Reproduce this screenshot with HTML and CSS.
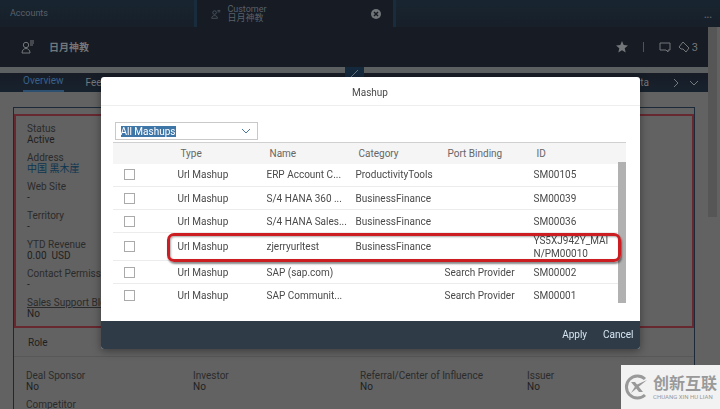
FILE: index.html
```html
<!DOCTYPE html>
<html lang="en">

<head>
    <meta charset="UTF-8">
    <meta name="viewport" content="width=device-width">
    <title>Mashup</title>
    <link rel="stylesheet" href="styles.css">
</head>

<body>
    <div class="app">
        <div class="tabbar">
            <a class="tab" href="#">Accounts</a>
            <div class="tab active">
                <svg class="tab-icon" viewBox="0 0 14 14">
                    <circle cx="5" cy="5" r="2.5" />
                    <path d="M1 13c0-5 8-5 8 0zM9 2h4M9 4h4" />
                </svg>
                <a class="tab-name" href="#">Customer<br>日月神教</a>
                <button class="close" aria-label="Close tab">
                    <svg viewBox="0 0 10 10">
                        <circle cx="5" cy="5" r="5" />
                        <path d="M3 3l4 4M7 3l-4 4" />
                    </svg>
                </button>
            </div>
            <button class="more" aria-label="More">•••</button>
        </div>

        <div class="page">
            <main>
                <header class="title">
                    <svg class="person" viewBox="0 0 14 14">
                        <circle cx="5" cy="5" r="2.7" />
                        <path d="M1 13c0-6 8-6 8 0zM9 1h4M9 3h4M9 5h3" />
                    </svg>
                    <h1>日月神教</h1>
                    <div class="actions">
                        <button aria-label="Favorite"><svg class="star" viewBox="0 0 12 12">
                                <path d="M6 0l1.7 4.1 4.3.3-3.3 2.8 1 4.3L6 9.2l-3.7 2.3 1-4.3L0 4.4l4.3-.3z" />
                            </svg></button>
                        <span class="sep"></span>
                        <button aria-label="Comments"><svg viewBox="0 0 12 12">
                                <path d="M1 2h10v7H9v2L7 9H1z" />
                            </svg></button>
                        <button class="tags" aria-label="Tags"><svg viewBox="0 0 12 12">
                                <path d="M5 1L1 6l2 2h2l3 3 3-4-4-4z" />
                            </svg>3</button>
                    </div>
                </header>
                <div class="strip">
                    <button class="edit" aria-label="Edit"><svg viewBox="0 0 12 12">
                            <path d="M2 11L10 3" />
                        </svg></button>
                </div>
                <nav>
                    <a class="current" href="#">Overview</a>
                    <a href="#">Feed</a>
                    <a class="last" href="#">Data</a>
                    <button aria-label="Next"><svg viewBox="0 0 10 10">
                            <path d="M3 1l4 4-4 4" />
                        </svg></button>
                    <button aria-label="All sections"><svg viewBox="0 0 10 10">
                            <path d="M1 3l4 4 4-4" />
                        </svg></button>
                </nav>

                <div class="panel">
                    <dl class="fields">
                        <div><dt>Status</dt><dd>Active</dd></div>
                        <div><dt>Address</dt><dd><a href="#">中国 黑木崖</a></dd></div>
                        <div><dt>Web Site</dt><dd>-</dd></div>
                        <div><dt>Territory</dt><dd>-</dd></div>
                        <div><dt>YTD Revenue</dt><dd>0.00&nbsp; USD</dd></div>
                        <div><dt>Contact Permission</dt><dd>-</dd></div>
                        <div><dt class="underlined">Sales Support Blocked</dt><dd>No</dd></div>
                    </dl>
                    <h2>Role</h2>
                    <dl class="roles">
                        <div><dt>Deal Sponsor</dt><dd>No</dd></div>
                        <div><dt>Investor</dt><dd>No</dd></div>
                        <div><dt>Referral/Center of Influence</dt><dd>No</dd></div>
                        <div><dt>Issuer</dt><dd>No</dd></div>
                        <div><dt>Competitor</dt><dd>No</dd></div>
                    </dl>
                </div>
            </main>
            <div class="scrollbar"></div>
        </div>
    </div>

    <div class="overlay">
        <section class="dialog" role="dialog" aria-labelledby="dialog-title">
            <h2 id="dialog-title">Mashup</h2>
            <div class="dialog-body">
                <div class="combo">
                    <input id="filter" type="text" value="All Mashups" aria-label="Mashup filter">
                    <button aria-label="Open list"><svg viewBox="0 0 10 10">
                            <path d="M1 3l4 4 4-4" />
                        </svg></button>
                </div>
                <div class="list">
                    <table>
                        <thead>
                            <tr>
                                <th class="check"></th>
                                <th>Type</th>
                                <th>Name</th>
                                <th>Category</th>
                                <th>Port Binding</th>
                                <th>ID</th>
                                <th class="gutter"></th>
                            </tr>
                        </thead>
                        <tbody>
                            <tr>
                                <td><input type="checkbox" aria-label="SM00105"></td>
                                <td>Url Mashup</td>
                                <td>ERP Account C...</td>
                                <td>ProductivityTools</td>
                                <td></td>
                                <td>SM00105</td>
                            </tr>
                            <tr>
                                <td><input type="checkbox" aria-label="SM00039"></td>
                                <td>Url Mashup</td>
                                <td>S/4 HANA 360 ...</td>
                                <td>BusinessFinance</td>
                                <td></td>
                                <td>SM00039</td>
                            </tr>
                            <tr>
                                <td><input type="checkbox" aria-label="SM00036"></td>
                                <td>Url Mashup</td>
                                <td>S/4 HANA Sales...</td>
                                <td>BusinessFinance</td>
                                <td></td>
                                <td>SM00036</td>
                            </tr>
                            <tr class="marked">
                                <td><input type="checkbox" aria-label="YS5XJ942Y_MAIN/PM00010"></td>
                                <td>Url Mashup</td>
                                <td>zjerryurltest</td>
                                <td>BusinessFinance</td>
                                <td></td>
                                <td class="long">YS5XJ942Y_MAI<wbr>N/PM00010</td>
                            </tr>
                            <tr>
                                <td><input type="checkbox" aria-label="SM00002"></td>
                                <td>Url Mashup</td>
                                <td>SAP (sap.com)</td>
                                <td></td>
                                <td>Search Provider</td>
                                <td>SM00002</td>
                            </tr>
                            <tr>
                                <td><input type="checkbox" aria-label="SM00001"></td>
                                <td>Url Mashup</td>
                                <td>SAP Communit...</td>
                                <td></td>
                                <td>Search Provider</td>
                                <td>SM00001</td>
                            </tr>
                        </tbody>
                    </table>
                    <div class="thumb"></div>
                </div>
            </div>
            <footer>
                <button>Apply</button>
                <button>Cancel</button>
            </footer>
        </section>
    </div>

    <div class="watermark">
        <svg viewBox="0 0 26 26">
            <path class="ring" d="M21 5A11 11 0 1 0 21 21" />
            <path class="cross" d="M7 8h4l8 10h-4zM23 6L7 19l5-8z" />
        </svg>
        <div>
            <strong>创新互联</strong>
            <small>CHUANG XIN HU LIAN</small>
        </div>
    </div>

    <script>
        // the filter text is selected when the dialog opens
        const filter = document.querySelector('#filter');
        filter.focus();
        filter.select();
    </script>
</body>

</html>
```

FILE: styles.css
```css
* {
    box-sizing: border-box;
}

body {
    margin: 0;
    height: 100vh;
    overflow: hidden;
    background: #626262;
    color: #1f1f1f;
    font: 10px/11px Roboto, "Noto Sans CJK SC", sans-serif;
}

button {
    display: flex;
    align-items: center;
    padding: 0;
    border: none;
    background: none;
    color: inherit;
    font: inherit;
}

a {
    color: inherit;
    text-decoration: none;
}

h1,
h2,
dl,
dd {
    margin: 0;
    font-weight: normal;
}

svg {
    display: block;
    width: 12px;
    height: 12px;
    fill: none;
    stroke: currentColor;
}

.app {
    display: flex;
    flex-direction: column;
    height: 100vh;
}

/*********************/
/* Tabs */
/*********************/
.tabbar {
    display: flex;
    flex: none;
    height: 27px;
    background: linear-gradient(#182530, #171f29);
    color: #59616a;
    font-size: 9px;
    line-height: 9px;
}

.tab {
    display: flex;
    align-items: center;
    width: 27%;
    padding-left: 10px;
}

.tab.active {
    width: 28%;
    padding: 0 12px 0 14px;
    border: solid #192c3d;
    border-width: 0 3px;
    background: #161b24;
}

.tab-icon {
    width: 10px;
    height: 10px;
    margin-right: 6px;
}

.close {
    margin-left: auto;
}

.close svg {
    width: 10px;
    height: 10px;
    fill: #717578;
    stroke: none;
}

.close path {
    stroke: #161b24;
    stroke-width: 1.5;
}

.more {
    margin-left: auto;
    padding: 8px 8px 0 0;
    font-size: 8px;
}

/*********************/
/* Page behind the dialog */
/*********************/
.page {
    display: flex;
    flex: 1;
    min-height: 0;
}

main {
    flex: 1;
    overflow: hidden;
}

.scrollbar {
    width: 12px;
    background: linear-gradient(#565656, #565656) 0 0 / 9px 190px no-repeat #626262;
}

.title {
    display: flex;
    align-items: center;
    height: 40px;
    padding: 0 10px 0 21px;
    background: #161b24;
    color: #747779;
}

.title .person {
    width: 14px;
    height: 14px;
}

.title h1 {
    margin-left: 14px;
    font-size: 10px;
    font-weight: bold;
}

.actions {
    display: flex;
    align-items: center;
    gap: 7px;
    margin-left: auto;
    font-size: 11px;
}

.star {
    fill: currentColor;
    stroke: none;
}

.sep {
    height: 10px;
    margin: 0 8px;
    border-left: 1px solid #4e5459;
}

.tags {
    gap: 2px;
}

.strip {
    display: flex;
    justify-content: center;
    height: 6px;
    background: #5d6060;
}

.edit {
    align-self: start;
    width: 19px;
    height: 12px;
    justify-content: center;
    background: #15293d;
    color: #647684;
}

nav {
    display: flex;
    align-items: center;
    gap: 22px;
    height: 19px;
    padding: 0 9px 0 23px;
    background: linear-gradient(#171c26, #17222e);
    color: #75787a;
}

nav .current {
    align-self: stretch;
    border-bottom: 2px solid #2d5070;
    color: #39618a;
    line-height: 16px;
}

nav .last {
    margin-left: auto;
}

nav svg {
    width: 10px;
    height: 10px;
}

nav button + button {
    margin-left: -14px;
}

.panel {
    margin: 15px 13px 0;
    border: 1px solid #1b2938;
}

/* the form fields share the height of their box */
.fields {
    display: flex;
    flex-direction: column;
    justify-content: space-between;
    min-height: 214px;
    margin-top: 6px;
    padding: 7px 11px;
    border: 2px solid #67282f;
}

dt {
    color: #2b2b2b;
}

dd a {
    color: #0c3550;
}

.underlined {
    text-decoration: underline;
}

.panel h2 {
    padding: 9px 14px 8px;
    border-bottom: 1px solid #585858;
    font-size: 10px;
}

.roles {
    display: grid;
    grid-template-columns: repeat(4, 1fr);
    gap: 7px 0;
    padding: 13px 0 0 12px;
}

/*********************/
/* Dialog */
/*********************/
.overlay {
    position: fixed;
    inset: 0;
    display: flex;
    align-items: start;
    justify-content: center;
    padding: 77px 0 0 20px;
}

.dialog {
    width: 77%;
    border-radius: 3px;
    overflow: hidden;
    background: #fff;
    color: #4a4a4a;
    box-shadow: 0 2px 8px #0006;
}

.dialog h2 {
    padding: 10px 0 7px;
    border-bottom: 1px solid #eee;
    font-size: 10px;
    text-align: center;
}

.dialog-body {
    padding: 16px 14px 14px 12px;
}

.combo {
    display: flex;
    align-items: center;
    width: 28%;
    height: 18px;
    margin: 0 0 2px 2px;
    padding: 0 6px 0 5px;
    border: 1px solid #c9c9c9;
}

.combo input {
    flex: 1;
    min-width: 0;
    padding: 0;
    border: none;
    outline: none;
    color: #333;
    font: inherit;
}

.combo input::selection {
    background: #3f76a8;
    color: #fff;
}

.combo svg {
    width: 10px;
    height: 10px;
    stroke: #48769d;
}

.list {
    position: relative;
}

table {
    width: 100%;
    table-layout: fixed;
    border-collapse: collapse;
}

th,
td {
    height: 23px;
    padding: 0;
    text-align: left;
    white-space: nowrap;
}

th {
    height: 21px;
    padding-left: 3px;
    border-top: 1px solid #d0d0d0;
    background: #f5f5f5;
    color: #666;
    font-weight: normal;
}

.check {
    width: 65px;
}

.gutter {
    width: 3px;
    padding: 0;
}

tbody tr {
    position: relative;
    border-bottom: 1px solid #ececec;
}

tbody tr:last-child {
    border-bottom: none;
}

td input {
    display: block;
    appearance: none;
    width: 11px;
    height: 11px;
    margin: 0 0 0 11px;
    border: 1px solid #aaa;
}

.long {
    line-height: 13px;
}

.marked td {
    height: 28px;
}

.marked::after {
    content: '';
    position: absolute;
    inset: 0 5px -2px 54px;
    border: 3px solid #cc1d22;
    border-radius: 7px;
    box-shadow: 1px 2px 2px #0007, inset 1px 1px 2px #0005;
    z-index: 1;
}

.thumb {
    position: absolute;
    top: 20px;
    right: 0;
    bottom: 4px;
    width: 8px;
    background: #b1b1b1;
}

.dialog footer {
    display: flex;
    justify-content: end;
    gap: 16px;
    padding: 8px 6px 9px;
    background: #2f3c48;
    color: #d5e5f2;
}

/*********************/
/* Watermark */
/*********************/
.watermark {
    position: fixed;
    right: 0;
    bottom: 0;
    display: flex;
    align-items: center;
    gap: 3px;
    padding: 9px 3px;
    background: #f2f2f2;
    color: #999;
}

.watermark svg {
    width: 26px;
    height: 26px;
}

.watermark .ring {
    stroke-width: 3;
}

.watermark .cross {
    fill: currentColor;
    stroke: none;
}

.watermark strong,
.watermark small {
    display: block;
}

.watermark strong {
    font-size: 16px;
    line-height: 18px;
}

.watermark small {
    font-size: 6px;
    line-height: 7px;
}
```
